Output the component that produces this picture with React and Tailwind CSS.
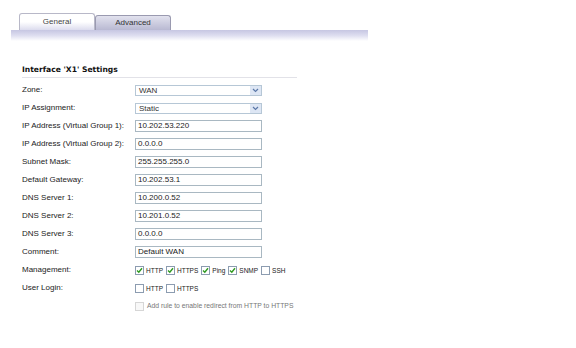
import React from 'react';

const font = { fontFamily: '"Liberation Sans", Arial, sans-serif' };

const Check = ({ checked, disabled }) => (
    <span className={`inline-flex w-[9px] h-[9px] items-center justify-center border ${disabled ? 'border-[#d6d6d6] bg-[#f8f8f8]' : 'border-[#8c9cb0] bg-white'}`}>
        {checked && (
            <svg width="7" height="7" viewBox="0 0 7 7">
                <path d="M1 3.5 L2.8 5.3 L6 1.2" fill="none" stroke="#2f9a20" strokeWidth="1.4" />
            </svg>
        )}
    </span>
);

const Opt = ({ checked, label }) => (
    <span className="flex items-center gap-[2px] mr-[3px]">
        <Check checked={checked} />
        <span>{label}</span>
    </span>
);

const TextBox = ({ value }) => (
    <div className="w-[127px] h-[12px] border border-[#a9b8c2] bg-white pl-[2px] leading-[10px] text-[#222]">{value}</div>
);

const SelectBox = ({ value }) => (
    <div className="w-[127px] h-[11px] border border-[#b6c7d6] bg-white flex items-center">
        <span className="flex-1 pl-[3px] leading-[9px] text-[#333]">{value}</span>
        <span className="w-[11px] h-full bg-[#dde6f4] flex items-center justify-center">
            <svg width="7" height="5" viewBox="0 0 7 5">
                <path d="M1 1 L3.5 3.5 L6 1" fill="none" stroke="#5b78a8" strokeWidth="1.2" />
            </svg>
        </span>
    </div>
);

const Row = ({ label, children }) => (
    <div className="flex items-center h-[18px]">
        <div className="w-[113px]">{label}</div>
        <div>{children}</div>
    </div>
);

export default function App() {
    return (
        <div className="w-[576px] h-[348px] bg-white text-[8px] text-[#222]" style={font}>
            <div className="pt-[13px] pl-[11px]">
                <div className="flex items-end pl-[8px]">
                    <div className="w-[76px] h-[17px] border border-b-0 border-[#b8b8c8] rounded-t-[3px] bg-gradient-to-b from-white via-white to-[#dcdcee] flex items-center justify-center text-[8px] text-[#444]">
                        General
                    </div>
                    <div className="w-[76px] h-[15px] border border-b-0 border-[#9a9ab0] rounded-t-[3px] bg-gradient-to-b from-[#e2e2ee] to-[#b9b9d2] flex items-center justify-center text-[8px] text-[#333]">
                        Advanced
                    </div>
                </div>
                <div className="w-[357px] h-[11px] bg-gradient-to-b from-[#c6c6e2] via-[#dedef0] to-white" />
            </div>

            <div className="ml-[22px] mt-[23px] w-[275px]">
                <div className="font-bold text-[7.6px] text-[#111] pb-[2px] border-b border-[#e2e2e8]" style={{ fontFamily: '"DejaVu Sans", Verdana, sans-serif' }}>
                    Interface 'X1' Settings
                </div>
            </div>

            <div className="ml-[22px] mt-[3px]">
                <Row label="Zone:"><SelectBox value="WAN" /></Row>
                <Row label="IP Assignment:"><SelectBox value="Static" /></Row>
                <Row label="IP Address (Virtual Group 1):"><TextBox value="10.202.53.220" /></Row>
                <Row label="IP Address (Virtual Group 2):"><TextBox value="0.0.0.0" /></Row>
                <Row label="Subnet Mask:"><TextBox value="255.255.255.0" /></Row>
                <Row label="Default Gateway:"><TextBox value="10.202.53.1" /></Row>
                <Row label="DNS Server 1:"><TextBox value="10.200.0.52" /></Row>
                <Row label="DNS Server 2:"><TextBox value="10.201.0.52" /></Row>
                <Row label="DNS Server 3:"><TextBox value="0.0.0.0" /></Row>
                <Row label="Comment:"><TextBox value="Default WAN" /></Row>
                <Row label="Management:">
                    <div className="flex items-center text-[6.5px]">
                        <Opt checked label="HTTP" />
                        <Opt checked label="HTTPS" />
                        <Opt checked label="Ping" />
                        <Opt checked label="SNMP" />
                        <Opt label="SSH" />
                    </div>
                </Row>
                <Row label="User Login:">
                    <div className="flex items-center text-[6.5px]">
                        <Opt label="HTTP" />
                        <Opt label="HTTPS" />
                    </div>
                </Row>
                <Row label="">
                    <div className="flex items-center gap-[3px] text-[6.8px] text-[#777]">
                        <Check disabled />
                        <span>Add rule to enable redirect from HTTP to HTTPS</span>
                    </div>
                </Row>
            </div>
        </div>
    );
}
